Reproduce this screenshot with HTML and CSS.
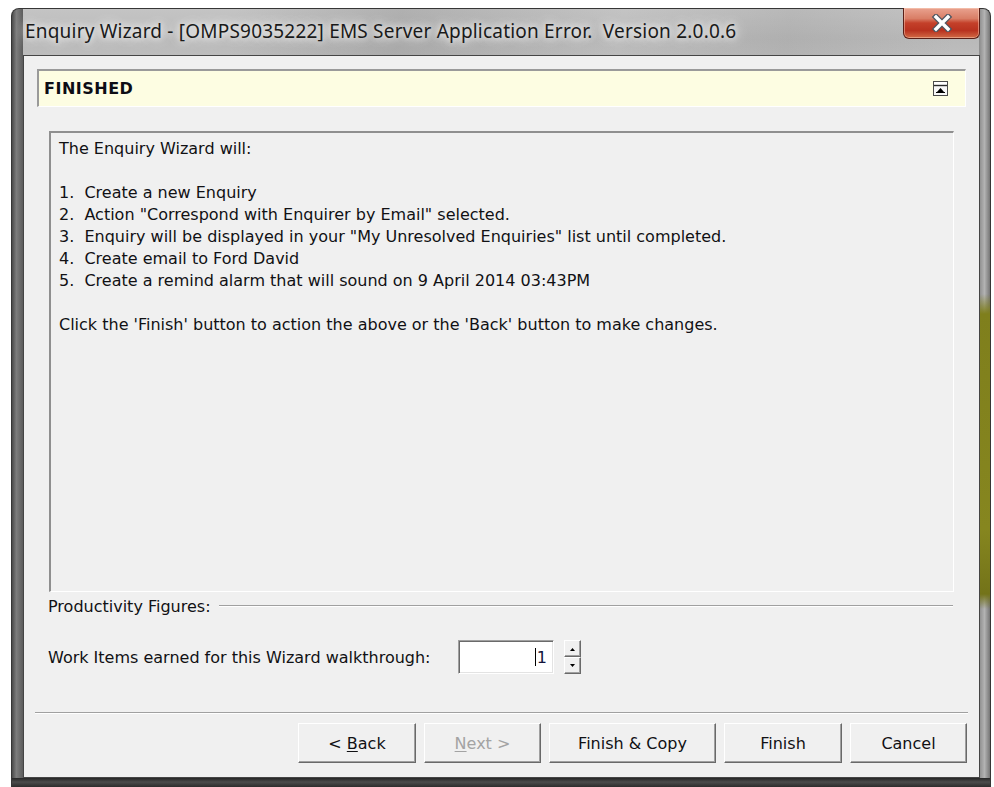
FILE: index.html
```html
<!DOCTYPE html>
<html lang="en">
<head>
<meta charset="utf-8">
<title>Enquiry Wizard</title>
<link rel="stylesheet" href="styles.css">
</head>
<body>
<div class="window">
  <div class="titlebar">
    <span class="title">Enquiry Wizard - [OMPS9035222] EMS Server Application Error.  Version 2.0.0.6</span>
    <button class="close-btn" type="button" aria-label="Close">
      <svg width="22" height="18" viewBox="0 0 22 18">
        <path d="M5 3 L17 15 M17 3 L5 15" stroke="#4d5560" stroke-width="6" stroke-linecap="square" fill="none"/>
        <path d="M5 3 L17 15 M17 3 L5 15" stroke="#ffffff" stroke-width="3.4" stroke-linecap="square" fill="none"/>
      </svg>
    </button>
  </div>

  <div class="client">
    <div class="step-header">
      <span class="step-name">FINISHED</span>
      <svg class="collapse-icon" width="15" height="15" viewBox="0 0 15 15">
        <rect x="0.5" y="0.5" width="14" height="14" fill="#f7f7f7" stroke="#4b4b4b"/>
        <rect x="1" y="1" width="13" height="3" fill="#ffffff"/>
        <line x1="1" y1="4.5" x2="14" y2="4.5" stroke="#2a2a2a" stroke-width="1.4"/>
        <polygon points="4,11 7.5,7 11,11" fill="#000000"/>
        <line x1="3" y1="11.5" x2="12" y2="11.5" stroke="#000" stroke-width="1"/>
      </svg>
    </div>

    <div class="summary">
      <p>The Enquiry Wizard will:</p>
      <p>&nbsp;</p>
      <p>1.  Create a new Enquiry</p>
      <p>2.  Action "Correspond with Enquirer by Email" selected.</p>
      <p>3.  Enquiry will be displayed in your "My Unresolved Enquiries" list until completed.</p>
      <p>4.  Create email to Ford David</p>
      <p>5.  Create a remind alarm that will sound on 9 April 2014 03:43PM</p>
      <p>&nbsp;</p>
      <p>Click the 'Finish' button to action the above or the 'Back' button to make changes.</p>
    </div>

    <div class="group-label">
      <span>Productivity Figures:</span>
      <span class="group-rule"></span>
    </div>

    <div class="field-row">
      <label class="field-label" for="work-items">Work Items earned for this Wizard walkthrough:</label>
      <div class="spin-input" id="work-items">
        <span class="caret"></span><span class="spin-value">1</span>
      </div>
      <div class="spin-buttons">
        <span class="spin-btn"><svg width="7" height="4" viewBox="0 0 7 4"><polygon points="1,4 3.5,1 6,4" fill="#000"/></svg></span>
        <span class="spin-btn"><svg width="7" height="4" viewBox="0 0 7 4"><polygon points="1,0 3.5,3 6,0" fill="#000"/></svg></span>
      </div>
    </div>

    <div class="separator"></div>

    <div class="buttons">
      <button class="btn w-118" type="button">&lt; <u>B</u>ack</button>
      <button class="btn w-117 disabled" type="button"><u>N</u>ext &gt;</button>
      <button class="btn w-167" type="button">Finish &amp; Copy</button>
      <button class="btn w-118" type="button">Finish</button>
      <button class="btn w-117" type="button">Cancel</button>
    </div>
  </div>
</div>
</body>
</html>
```

FILE: styles.css
```css
* {
  box-sizing: border-box;
}

html,
body {
  margin: 0;
  padding: 0;
  background: #ffffff;
}

body {
  width: 994px;
  height: 787px;
  overflow: hidden;
  font-family: "DejaVu Sans", "Liberation Sans", sans-serif;
  font-size: 16px;
  color: #111114;
}

/* Aero-style glass frame */
.window {
  margin: 8px 0 0 11px;
  width: 980px;
  height: 779px;
  border: 1px solid #363636;
  border-bottom: none;
  border-radius: 8px 8px 0 0;
  padding: 0 10px 9px 11px;
  display: flex;
  flex-direction: column;
  background:
    linear-gradient(to bottom, #262626, #4b4b4b 45%, #2c2c2c) left bottom / 100% 9px no-repeat,
    linear-gradient(to bottom, rgba(0,0,0,0) 285px, #7f7f1c 305px, #86861f 520px, #737319 585px, rgba(0,0,0,0) 600px) right top / 11px 100% no-repeat,
    linear-gradient(to right, #8a8a8a, #b3b3b3 50%, #767676) right top / 11px 100% no-repeat,
    linear-gradient(to right, #4a4a4a, #7d7d7d 40%, #5c5c5c) left top / 11px 100% no-repeat,
    linear-gradient(100deg, rgba(255,255,255,0) 20%, rgba(90,90,90,0.18) 35%, rgba(255,255,255,0) 55%, rgba(120,120,120,0.15) 70%, rgba(255,255,255,0) 85%),
    linear-gradient(to bottom, #c4c4c4, #b9b9b9 30px, #bdbdbd 46px);
}

.titlebar {
  height: 46px;
  flex: none;
  display: flex;
  align-items: flex-start;
}

.title {
  margin-top: 10px;
  padding-left: 2px;
  line-height: 25px;
  font-family: "Noto Sans", "Open Sans", sans-serif;
  font-size: 19px;
  letter-spacing: 0.2px;
  color: #1a1a1a;
  white-space: pre;
  text-shadow:
    0 0 6px rgba(255,255,255,0.95),
    0 0 12px rgba(255,255,255,0.85),
    0 0 18px rgba(255,255,255,0.6);
}

.close-btn {
  margin: -1px 0 0 auto;
  width: 77px;
  height: 31px;
  padding: 0;
  border: 1px solid #5a1f17;
  border-top: none;
  border-radius: 0 0 6px 6px;
  display: flex;
  align-items: center;
  justify-content: center;
  background: linear-gradient(to bottom, #e9a28f 0%, #d97e66 35%, #c4402a 50%, #b8321f 75%, #d26a45 100%);
  box-shadow: inset 0 0 0 1px rgba(255,220,200,0.45);
}

/* Dialog client area */
.client {
  flex: 1;
  background: #f0f0f0;
  border: 1px solid #454545;
  padding: 13px 13px 0;
  display: flex;
  flex-direction: column;
}

.step-header {
  height: 38px;
  flex: none;
  display: flex;
  align-items: center;
  justify-content: space-between;
  background: #fdfde2;
  border-top: 2px solid #9a9a9a;
  border-left: 2px solid #9a9a9a;
  border-right: 1px solid #ffffff;
  border-bottom: 1px solid #ffffff;
  padding: 0 17px 0 5px;
}

.step-name {
  font-weight: bold;
  font-size: 16px;
  letter-spacing: 0.5px;
  color: #0c0c14;
}

.collapse-icon {
  display: block;
}

.summary {
  margin: 24px 12px 0;
  height: 461px;
  flex: none;
  border-top: 2px solid #8f8f8f;
  border-left: 2px solid #8f8f8f;
  border-right: 1px solid #ffffff;
  border-bottom: 1px solid #ffffff;
  padding: 5px 8px;
}

.summary p {
  margin: 0;
  line-height: 22px;
  white-space: pre;
}

.group-label {
  margin: 4px 13px 0 11px;
  height: 20px;
  display: flex;
  align-items: center;
  gap: 8px;
}

.group-rule {
  flex: 1;
  height: 2px;
  border-top: 1px solid #a0a0a0;
  border-bottom: 1px solid #ffffff;
}

.field-row {
  margin: 24px 0 0 11px;
  height: 34px;
  display: flex;
  align-items: center;
}

.field-label {
  width: 410px;
}

.spin-input {
  width: 96px;
  height: 34px;
  background: #ffffff;
  border-top: 1px solid #a0a0a0;
  border-left: 1px solid #a0a0a0;
  border-right: 1px solid #ffffff;
  border-bottom: 1px solid #ffffff;
  box-shadow: inset 1px 1px 0 #6a6a6a, inset -1px -1px 0 #e3e3e3;
  display: flex;
  align-items: center;
  justify-content: flex-end;
  padding-right: 6px;
}

.caret {
  width: 1px;
  height: 18px;
  background: #000;
  margin-right: 1px;
}

.spin-value {
  color: #14143c;
}

.spin-buttons {
  margin-left: 10px;
  display: flex;
  flex-direction: column;
}

.spin-btn {
  width: 17px;
  height: 17px;
  display: flex;
  align-items: center;
  justify-content: center;
  background: #f0f0f0;
  border-top: 1px solid #ffffff;
  border-left: 1px solid #ffffff;
  border-right: 1px solid #6a6a6a;
  border-bottom: 1px solid #6a6a6a;
  box-shadow: inset -1px -1px 0 #a0a0a0;
}

.separator {
  margin: 38px -2px 0;
  height: 2px;
  border-top: 1px solid #a0a0a0;
  border-bottom: 1px solid #ffffff;
}

.buttons {
  margin: 9px -1px 0 0;
  display: flex;
  justify-content: flex-end;
  gap: 8px;
}

.btn {
  height: 40px;
  padding: 0;
  font-family: "DejaVu Sans", "Liberation Sans", sans-serif;
  font-size: 16px;
  color: #111114;
  background: #f0f0f0;
  border-top: 1px solid #ffffff;
  border-left: 1px solid #ffffff;
  border-right: 1px solid #696969;
  border-bottom: 1px solid #696969;
  box-shadow: inset -1px -1px 0 #a0a0a0;
}

.btn u {
  text-decoration-thickness: 1px;
  text-underline-offset: 2px;
}

.btn.disabled {
  color: #a3a3a3;
}

.w-117 { width: 117px; }
.w-118 { width: 118px; }
.w-167 { width: 167px; }
```
